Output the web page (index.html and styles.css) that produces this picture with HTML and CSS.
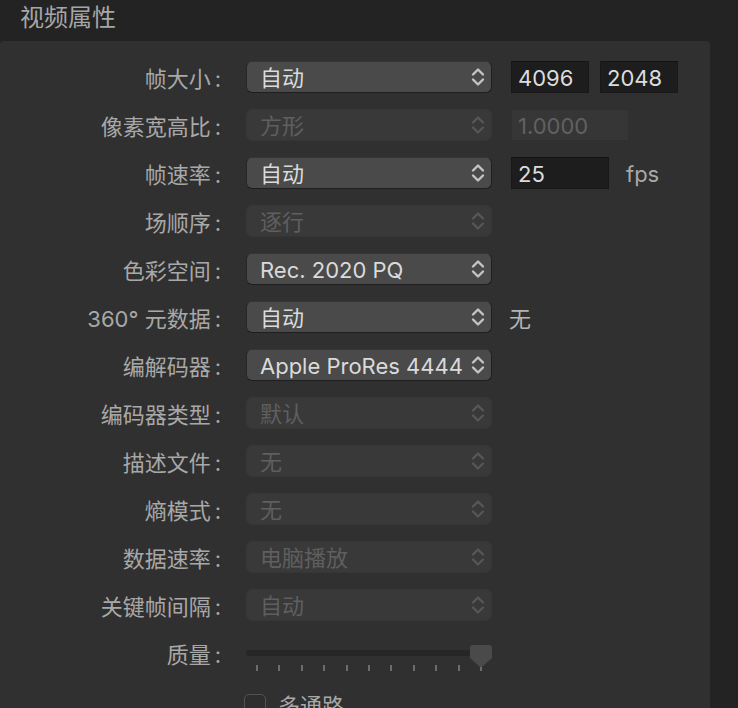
FILE: index.html
```html
<!DOCTYPE html>
<html lang="zh">
<head>
<meta charset="utf-8">
<link rel="stylesheet" href="styles.css">
</head>
<body>
<div class="title">视频属性</div>
<div class="panel">
  <div class="form">
    <div class="row">
      <div class="label">帧大小</div>
      <div class="popup"><span class="txt">自动</span><svg class="chev" viewBox="0 0 14 20"><path d="M2 7.5 L7 2.5 L12 7.5 M2 12.5 L7 17.5 L12 12.5"/></svg></div>
      <div class="extra">
        <div class="field w78">4096</div>
        <div class="field w78">2048</div>
      </div>
    </div>
    <div class="row">
      <div class="label">像素宽高比</div>
      <div class="popup off"><span class="txt">方形</span><svg class="chev" viewBox="0 0 14 20"><path d="M2 7.5 L7 2.5 L12 7.5 M2 12.5 L7 17.5 L12 12.5"/></svg></div>
      <div class="extra">
        <div class="field off w118">1.0000</div>
      </div>
    </div>
    <div class="row">
      <div class="label">帧速率</div>
      <div class="popup"><span class="txt">自动</span><svg class="chev" viewBox="0 0 14 20"><path d="M2 7.5 L7 2.5 L12 7.5 M2 12.5 L7 17.5 L12 12.5"/></svg></div>
      <div class="extra">
        <div class="field w98">25</div>
        <div class="unit">fps</div>
      </div>
    </div>
    <div class="row">
      <div class="label">场顺序</div>
      <div class="popup off"><span class="txt">逐行</span><svg class="chev" viewBox="0 0 14 20"><path d="M2 7.5 L7 2.5 L12 7.5 M2 12.5 L7 17.5 L12 12.5"/></svg></div>
    </div>
    <div class="row">
      <div class="label">色彩空间</div>
      <div class="popup"><span class="txt">Rec. 2020 PQ</span><svg class="chev" viewBox="0 0 14 20"><path d="M2 7.5 L7 2.5 L12 7.5 M2 12.5 L7 17.5 L12 12.5"/></svg></div>
    </div>
    <div class="row">
      <div class="label">360° 元数据</div>
      <div class="popup"><span class="txt">自动</span><svg class="chev" viewBox="0 0 14 20"><path d="M2 7.5 L7 2.5 L12 7.5 M2 12.5 L7 17.5 L12 12.5"/></svg></div>
      <div class="extra">
        <div class="note">无</div>
      </div>
    </div>
    <div class="row">
      <div class="label">编解码器</div>
      <div class="popup"><span class="txt">Apple ProRes 4444</span><svg class="chev" viewBox="0 0 14 20"><path d="M2 7.5 L7 2.5 L12 7.5 M2 12.5 L7 17.5 L12 12.5"/></svg></div>
    </div>
    <div class="row">
      <div class="label">编码器类型</div>
      <div class="popup off"><span class="txt">默认</span><svg class="chev" viewBox="0 0 14 20"><path d="M2 7.5 L7 2.5 L12 7.5 M2 12.5 L7 17.5 L12 12.5"/></svg></div>
    </div>
    <div class="row">
      <div class="label">描述文件</div>
      <div class="popup off"><span class="txt">无</span><svg class="chev" viewBox="0 0 14 20"><path d="M2 7.5 L7 2.5 L12 7.5 M2 12.5 L7 17.5 L12 12.5"/></svg></div>
    </div>
    <div class="row">
      <div class="label">熵模式</div>
      <div class="popup off"><span class="txt">无</span><svg class="chev" viewBox="0 0 14 20"><path d="M2 7.5 L7 2.5 L12 7.5 M2 12.5 L7 17.5 L12 12.5"/></svg></div>
    </div>
    <div class="row">
      <div class="label">数据速率</div>
      <div class="popup off"><span class="txt">电脑播放</span><svg class="chev" viewBox="0 0 14 20"><path d="M2 7.5 L7 2.5 L12 7.5 M2 12.5 L7 17.5 L12 12.5"/></svg></div>
    </div>
    <div class="row">
      <div class="label">关键帧间隔</div>
      <div class="popup off"><span class="txt">自动</span><svg class="chev" viewBox="0 0 14 20"><path d="M2 7.5 L7 2.5 L12 7.5 M2 12.5 L7 17.5 L12 12.5"/></svg></div>
    </div>
    <div class="row">
      <div class="label">质量</div>
      <div class="slider">
        <div class="track"></div>
        <div class="ticks">
          <i></i><i></i><i></i><i></i><i></i><i></i><i></i><i></i><i></i><i></i><i></i>
        </div>
        <svg class="knob" viewBox="0 0 22 22"><path d="M3 0 H19 Q22 0 22 3 V13 L12 22 H10 L0 13 V3 Q0 0 3 0 Z"/></svg>
      </div>
    </div>
    <div class="row">
      <div class="nolabel"></div>
      <div class="check">
        <span class="box"></span>
        <span class="check-label">多通路</span>
      </div>
    </div>
  </div>
</div>
</body>
</html>
```

FILE: styles.css
```css
html, body {
  margin: 0;
  padding: 0;
  background: #232323;
  overflow: hidden;
  height: 708px;
}

body {
  font-family: "Inter", "Noto Sans CJK SC", sans-serif;
  color: #a8a8a8;
}

.title {
  height: 43px;
  margin-top: -2px;
  padding-left: 20px;
  box-sizing: border-box;
  font-family: "Noto Sans CJK SC", sans-serif;
  font-size: 24px;
  line-height: 35px;
  color: #a6a6a6;
}

.panel {
  width: 710px;
  height: 700px;
  background: #303030;
  border-radius: 4px 4px 0 0;
  box-sizing: border-box;
  padding-top: 20px;
}

.form {
  display: flex;
  flex-direction: column;
  gap: 16px;
}

.row {
  display: flex;
  align-items: center;
  height: 32px;
  font-size: 22px;
  line-height: 32px;
}

.label,
.nolabel {
  width: 221px;
  height: 32px;
  margin-right: 25px;
  padding-top: 2px;
  box-sizing: border-box;
  text-align: right;
  white-space: nowrap;
  color: #a8a8a8;
  flex: none;
}

.label::after {
  content: ":";
  margin-left: 4px;
}

.popup {
  width: 246px;
  height: 32px;
  box-sizing: border-box;
  flex: none;
  display: flex;
  align-items: flex-start;
  justify-content: space-between;
  padding: 0 6px 0 13px;
  background: #4a4a4a;
  border: 1px solid #272727;
  border-top-color: #363636;
  border-right-color: #1f1f1f;
  border-bottom-color: #1f1f1f;
  border-radius: 6px;
  color: #dadada;
  white-space: nowrap;
}

.popup .txt {
  display: block;
  height: 30px;
  line-height: 32px;
}

.popup.off {
  background: #393939;
  border-color: #363636;
  color: #5f5f5f;
}

.chev {
  width: 14px;
  height: 20px;
  margin-top: 5px;
  flex: none;
}

.chev path {
  fill: none;
  stroke: #c4c4c4;
  stroke-width: 2.4;
  stroke-linecap: round;
  stroke-linejoin: round;
}

.popup.off .chev path {
  stroke: #565656;
}

.extra {
  display: flex;
  align-items: center;
  margin-left: 19px;
  gap: 11px;
}

.field {
  height: 32px;
  box-sizing: border-box;
  padding-left: 6px;
  background: #1d1d1d;
  border: 1px solid #181818;
  border-top-color: #141414;
  color: #dcdcdc;
  font-size: 22px;
  line-height: 30px;
  padding-top: 1px;
}

.field.off {
  background: #363636;
  border-color: #2f2f2f;
  color: #616161;
}

.w78 { width: 78px; }
.w98 { width: 98px; }
.w118 { width: 118px; }

.unit {
  margin-left: 6px;
  height: 32px;
  padding-top: 1px;
  box-sizing: border-box;
  color: #a8a8a8;
}

.note {
  margin-left: -2px;
  height: 32px;
  padding-top: 2px;
  box-sizing: border-box;
  color: #b4b4b4;
}

.slider {
  position: relative;
  width: 246px;
  height: 32px;
  flex: none;
}

.track {
  position: absolute;
  left: 0;
  right: 0;
  top: 13px;
  height: 6px;
  border-radius: 3px;
  background: #262626;
}

.ticks {
  position: absolute;
  left: 0;
  right: 0;
  top: 28px;
  display: flex;
  justify-content: space-between;
  padding: 0 10px;
}

.ticks i {
  display: block;
  width: 2px;
  height: 6px;
  background: #6c6c6c;
}

.knob {
  position: absolute;
  left: 224px;
  top: 8px;
  width: 22px;
  height: 22px;
}

.knob path {
  fill: #4a4a4a;
}

.check {
  display: flex;
  align-items: flex-start;
  align-self: flex-start;
  margin-left: -2px;
  padding-top: 9px;
}

.box {
  width: 22px;
  height: 22px;
  box-sizing: border-box;
  border: 1.5px solid #525252;
  border-radius: 5px;
  background: #2e2e2e;
}

.check-label {
  margin-left: 12px;
  margin-top: -4px;
  color: #a8a8a8;
}
```
